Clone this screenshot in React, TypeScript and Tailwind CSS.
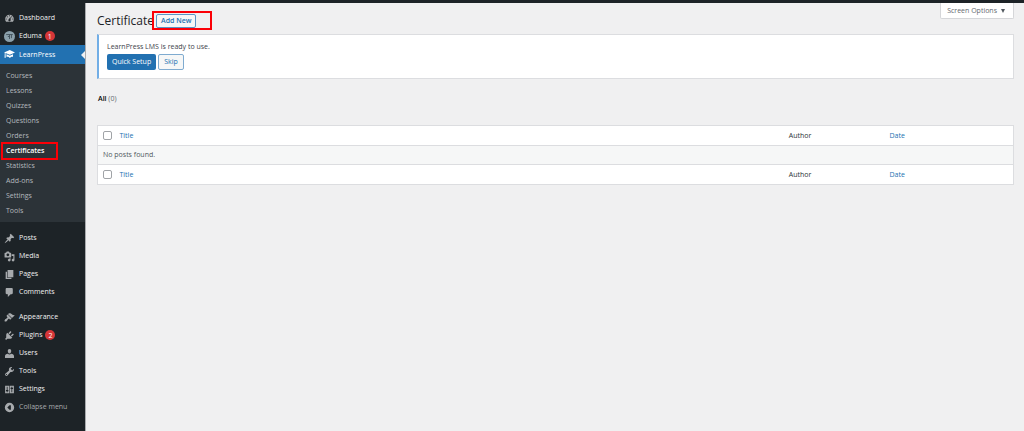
import type { ReactNode } from "react";

const ICONS: Record<string, string> = {
  dashboard:
    "M3.76 16h12.48c1.1-1.37 1.76-3.11 1.76-5 0-4.42-3.58-8-8-8s-8 3.58-8 8c0 1.89.66 3.63 1.76 5zM10 4c.55 0 1 .45 1 1s-.45 1-1 1-1-.45-1-1 .45-1 1-1zM6 6c.55 0 1 .45 1 1s-.45 1-1 1-1-.45-1-1 .45-1 1-1zm8 0c.55 0 1 .45 1 1s-.45 1-1 1-1-.45-1-1 .45-1 1-1zm-5.37 5.55L12 7v6c0 1.1-.9 2-2 2s-2-.9-2-2c0-.57.24-1.08.63-1.45zM4 10c.55 0 1 .45 1 1s-.45 1-1 1-1-.45-1-1 .45-1 1-1zm12 0c.55 0 1 .45 1 1s-.45 1-1 1-1-.45-1-1 .45-1 1-1z",
  learn:
    "M10.5 2L0 6.2l1.4.6L1 16h2.2l-.5-8.7 7.8 3.1L20 6.2zM4.6 9.6v4.6c2.6-.5 4.6.4 6.1 2.3 1.5-1.9 3.300-2.800 5.700-2.300V9.600l-5.900 2.500z",
  post: "M10.44 3.02l1.82-1.82 6.36 6.35-1.83 1.82c-1.05-.68-2.48-.57-3.41.36l-.75.75c-.92.93-1.04 2.35-.35 3.41l-1.83 1.82-2.41-2.41-2.8 2.79c-.42.42-3.38 2.71-3.8 2.29s1.86-3.39 2.28-3.81l2.79-2.79L4.1 9.36l1.83-1.82c1.05.69 2.48.57 3.4-.36l.75-.75c.93-.92 1.05-2.35.36-3.41z",
  media:
    "M13 11V4c0-.55-.45-1-1-1h-1.67L9 1H5L3.67 3H2c-.55 0-1 .45-1 1v7c0 .55.45 1 1 1h10c.55 0 1-.45 1-1zM7 4.5c1.38 0 2.5 1.12 2.5 2.5S8.38 9.5 7 9.5 4.5 8.38 4.5 7 5.62 4.5 7 4.5zM14 6h5v10.5c0 1.38-1.12 2.5-2.5 2.5S14 17.88 14 16.5s1.12-2.5 2.5-2.5c.17 0 .34.02.5.05V9h-3V6zm-4 8.05V13h2v3.5c0 1.38-1.12 2.5-2.5 2.5S7 17.88 7 16.5 8.12 14 9.5 14c.17 0 .34.02.5.05z",
  page: "M6.500 15V2H17v13zM5.500 16h8v2H3V5h2.500z",
  comments:
    "M5 2h9c1.1 0 2 .9 2 2v7c0 1.1-.9 2-2 2h-2l-5 5v-5H5c-1.1 0-2-.9-2-2V4c0-1.1.9-2 2-2z",
  appearance:
    "M14.48 11.06L7.41 3.99l1.5-1.5c.5-.56 2.3-.47 3.51.32 1.21.8 1.43 1.28 2.91 2.1 1.18.64 2.45 1.26 4.45.85zm-.71.71L6.7 4.7 4.93 6.47c-.39.39-.39 1.02 0 1.41l1.06 1.06c.39.39.39 1.03 0 1.42-.6.6-1.43 1.11-2.21 1.69-.35.26-.7.53-1.01.84C1.43 14.23.4 16.08 1.4 17.07c.99 1 2.84-.03 4.18-1.36.31-.31.58-.66.85-1.02.57-.78 1.08-1.61 1.69-2.21.39-.39 1.02-.39 1.41 0l1.06 1.06c.39.39 1.02.39 1.41 0z",
  plugins:
    "M13.11 4.36L9.87 7.6 8 5.73l3.24-3.24c.35-.34 1.05-.2 1.56.32.52.51.66 1.21.31 1.55zm-8 1.77l.91-1.12 9.01 9.01-1.19.84c-.71.71-2.63 1.16-3.82 1.16H6.14L4.9 17.26c-.59.59-1.54.59-2.12 0-.59-.58-.59-1.53 0-2.12l1.24-1.24v-3.88c0-1.13.4-3.19 1.09-3.89zm7.26 3.97l3.24-3.24c.34-.35 1.04-.21 1.55.31.52.51.66 1.21.31 1.55l-3.24 3.25z",
  users:
    "M10 10.200c-2.400 0-3.100-3.600-3.100-4.200C6.700 3.500 8 2 10 2s3.300 1.500 3.100 4c0 .6-.7 4.200-3.100 4.200zM7 10.400c1.800 1.700 4.200 1.700 6 0 3.300.4 5.200 2.200 5.200 4.600V18H1.800v-3c0-2.400 1.900-4.200 5.200-4.600z",
  tools:
    "M16.68 9.77c-1.34 1.34-3.3 1.67-4.95.99l-5.41 6.52c-.99.99-2.59.99-3.58 0s-.99-2.59 0-3.57l6.52-5.42c-.68-1.65-.35-3.61.99-4.95 1.28-1.28 3.12-1.62 4.72-1.06l-2.89 2.89 2.82 2.82 2.86-2.87c.53 1.58.18 3.39-1.08 4.65zM3.81 16.21c.4.39 1.04.39 1.43 0 .4-.4.4-1.04 0-1.43-.39-.4-1.03-.4-1.43 0-.39.39-.39 1.03 0 1.43z",
  settings:
    "M2 3h7.500v14H2zM10.500 3H18v14h-7.500zM5 5v6H3.500v2H5v2h1.500v-2H8v-2H6.500V5zM13.500 5v2H12v2h1.500v6H15V9h1.500V7H15V5z",
  collapse:
    "M10 1.500a8.500 8.500 0 1 0 0 17 8.500 8.500 0 0 0 0-17zM12.500 6v8H10l-4-4 4-4z",
};

function Icon({ name }: { name: string }) {
  return (
    <svg viewBox="0 0 20 20" className="size-[11px] shrink-0" fill="currentColor" fillRule="evenodd" aria-hidden="true">
      <path d={ICONS[name]} />
    </svg>
  );
}

function EdumaIcon() {
  return (
    <svg viewBox="0 0 20 20" className="size-[11px] shrink-0" aria-hidden="true">
      <circle cx="10" cy="10" r="10" fill="#8ba0ab" />
      <path d="M4 6.5h12M7 10h3M10 7v7.5M13.5 7v6" stroke="#3c4c56" strokeWidth="1.6" fill="none" />
    </svg>
  );
}

function MenuItem({ icon, label, badge }: { icon: ReactNode; label: string; badge?: string }) {
  return (
    <li>
      <a href="#" className="flex h-[18px] items-center gap-1 pl-1 text-[#a7aaad]">
        {icon}
        <span className="text-[#f0f0f1]">{label}</span>
        {badge && (
          <span className="-ml-px flex size-[10px] items-center justify-center rounded-full bg-[#d63638] text-[7px] leading-none text-white">
            {badge}
          </span>
        )}
      </a>
    </li>
  );
}

const SUBMENU = ["Courses", "Lessons", "Quizzes", "Questions", "Orders", "Certificates", "Statistics", "Add-ons", "Settings", "Tools"];

function Sidebar() {
  return (
    <nav aria-label="Main menu" className="w-[85px] shrink-0 bg-[#1d2327] pt-1.5">
      <ul>
        <MenuItem icon={<Icon name="dashboard" />} label="Dashboard" />
        <MenuItem icon={<EdumaIcon />} label="Eduma" badge="1" />
        <li>
          <a href="#" className="flex h-[19px] items-center gap-1 bg-[#2271b1] pl-1 text-white">
            <Icon name="learn" />
            <span>LearnPress</span>
            <svg viewBox="0 0 4 8" className="ml-auto h-2 w-1" aria-hidden="true">
              <path d="M4 0v8L0 4z" fill="#f0f0f1" />
            </svg>
          </a>
          <ul className="bg-[#2c3338] py-1">
            {SUBMENU.map((item) => (
              <li key={item} className="relative">
                <a
                  href="#"
                  className={
                    item === "Certificates"
                      ? "flex h-[15px] items-center pl-1.5 font-semibold text-white"
                      : "flex h-[15px] items-center pl-1.5 text-[#b4b9be]"
                  }
                >
                  {item}
                </a>
                {item === "Certificates" && (
                  <span className="pointer-events-none absolute -top-px left-px h-[18px] w-[57px] border-2 border-[#fb0007]" />
                )}
              </li>
            ))}
          </ul>
        </li>
      </ul>
      <ul className="pt-[7px]">
        <MenuItem icon={<Icon name="post" />} label="Posts" />
        <MenuItem icon={<Icon name="media" />} label="Media" />
        <MenuItem icon={<Icon name="page" />} label="Pages" />
        <MenuItem icon={<Icon name="comments" />} label="Comments" />
      </ul>
      <ul className="pt-[7px]">
        <MenuItem icon={<Icon name="appearance" />} label="Appearance" />
        <MenuItem icon={<Icon name="plugins" />} label="Plugins" badge="2" />
        <MenuItem icon={<Icon name="users" />} label="Users" />
        <MenuItem icon={<Icon name="tools" />} label="Tools" />
        <MenuItem icon={<Icon name="settings" />} label="Settings" />
      </ul>
      <button type="button" className="flex h-[18px] items-center gap-1 pl-1 text-[#a7aaad]">
        <Icon name="collapse" />
        <span>Collapse menu</span>
      </button>
    </nav>
  );
}

function HeadingRow({ where }: { where: string }) {
  return (
    <tr className="h-5 bg-white text-left">
      <td className="w-[22px] pl-[5px]">
        <input
          type="checkbox"
          aria-label={`Select all (${where})`}
          className="block size-[9px] appearance-none rounded-[2px] border border-[#a0a3a7] bg-white"
        />
      </td>
      <th scope="col" className="font-normal">
        <a href="#" className="text-[#2271b1]">Title</a>
      </th>
      <th scope="col" className="w-[11%] font-normal text-[#2c3338]">Author</th>
      <th scope="col" className="w-[124px] font-normal">
        <a href="#" className="text-[#2271b1]">Date</a>
      </th>
    </tr>
  );
}

export default function App() {
  return (
    <div className="flex min-h-screen flex-col bg-[#f0f0f1] font-['Open_Sans','Noto_Sans',sans-serif] text-[7px] leading-[10px] text-[#3c434a]">
      <header className="h-[3px] bg-[#1d2327]" />
      <div className="flex grow">
        <Sidebar />
        <main className="min-w-0 grow border-l border-[#a9abae] pr-2.5 pl-[11px]">
          <div className="flex items-start justify-between">
            <div className="flex items-center pt-[9px]">
              <h1 className="text-[12px] leading-[18px] text-[#1d2327]">Certificate</h1>
              <div className="relative ml-0.5">
                <a
                  href="#"
                  className="flex h-[14px] items-center rounded-[2px] border border-[#5b94c4] bg-[#f6f7f7] px-1 font-semibold text-[#2271b1]"
                >
                  Add New
                </a>
                <span className="pointer-events-none absolute -top-[3px] -left-1 h-[19px] w-[60px] border-2 border-[#fb0007]" />
              </div>
            </div>
            <button
              type="button"
              className="flex h-4 items-center gap-1 rounded-b-[2px] border border-t-0 border-[#d5d6d9] bg-white pr-2 pl-1.5 text-[#646970]"
            >
              Screen Options
              <svg viewBox="0 0 4 4" className="size-1" aria-hidden="true">
                <path d="M0 0h4L2 4z" fill="#50575e" />
              </svg>
            </button>
          </div>

          <section className="mt-1 border border-l-2 border-[#dcdde0] border-l-[#72aee6] bg-white px-2 pt-[7px] pb-2">
            <p>LearnPress LMS is ready to use.</p>
            <div className="mt-0.5 flex gap-0.5">
              <button type="button" className="h-4 rounded-[2px] bg-[#2271b1] px-[5px] text-white">
                Quick Setup
              </button>
              <button type="button" className="h-4 rounded-[2px] border border-[#7fabd0] bg-[#f6f7f7] px-[5px] text-[#2271b1]">
                Skip
              </button>
            </div>
          </section>

          <div className="mt-[15px] pl-px">
            <a href="#" className="font-semibold text-black">All</a> <span className="text-[#646970]">(0)</span>
          </div>

          <table className="mt-[21px] w-full table-fixed border-collapse border border-[#dcdde0]">
            <thead className="border-b border-[#dcdde0]">
              <HeadingRow where="top" />
            </thead>
            <tbody>
              <tr className="h-[19px] bg-[#f6f7f7]">
                <td colSpan={4} className="pl-[5px] text-[#50575e]">No posts found.</td>
              </tr>
            </tbody>
            <tfoot className="border-t border-[#dcdde0]">
              <HeadingRow where="bottom" />
            </tfoot>
          </table>
        </main>
      </div>
    </div>
  );
}
